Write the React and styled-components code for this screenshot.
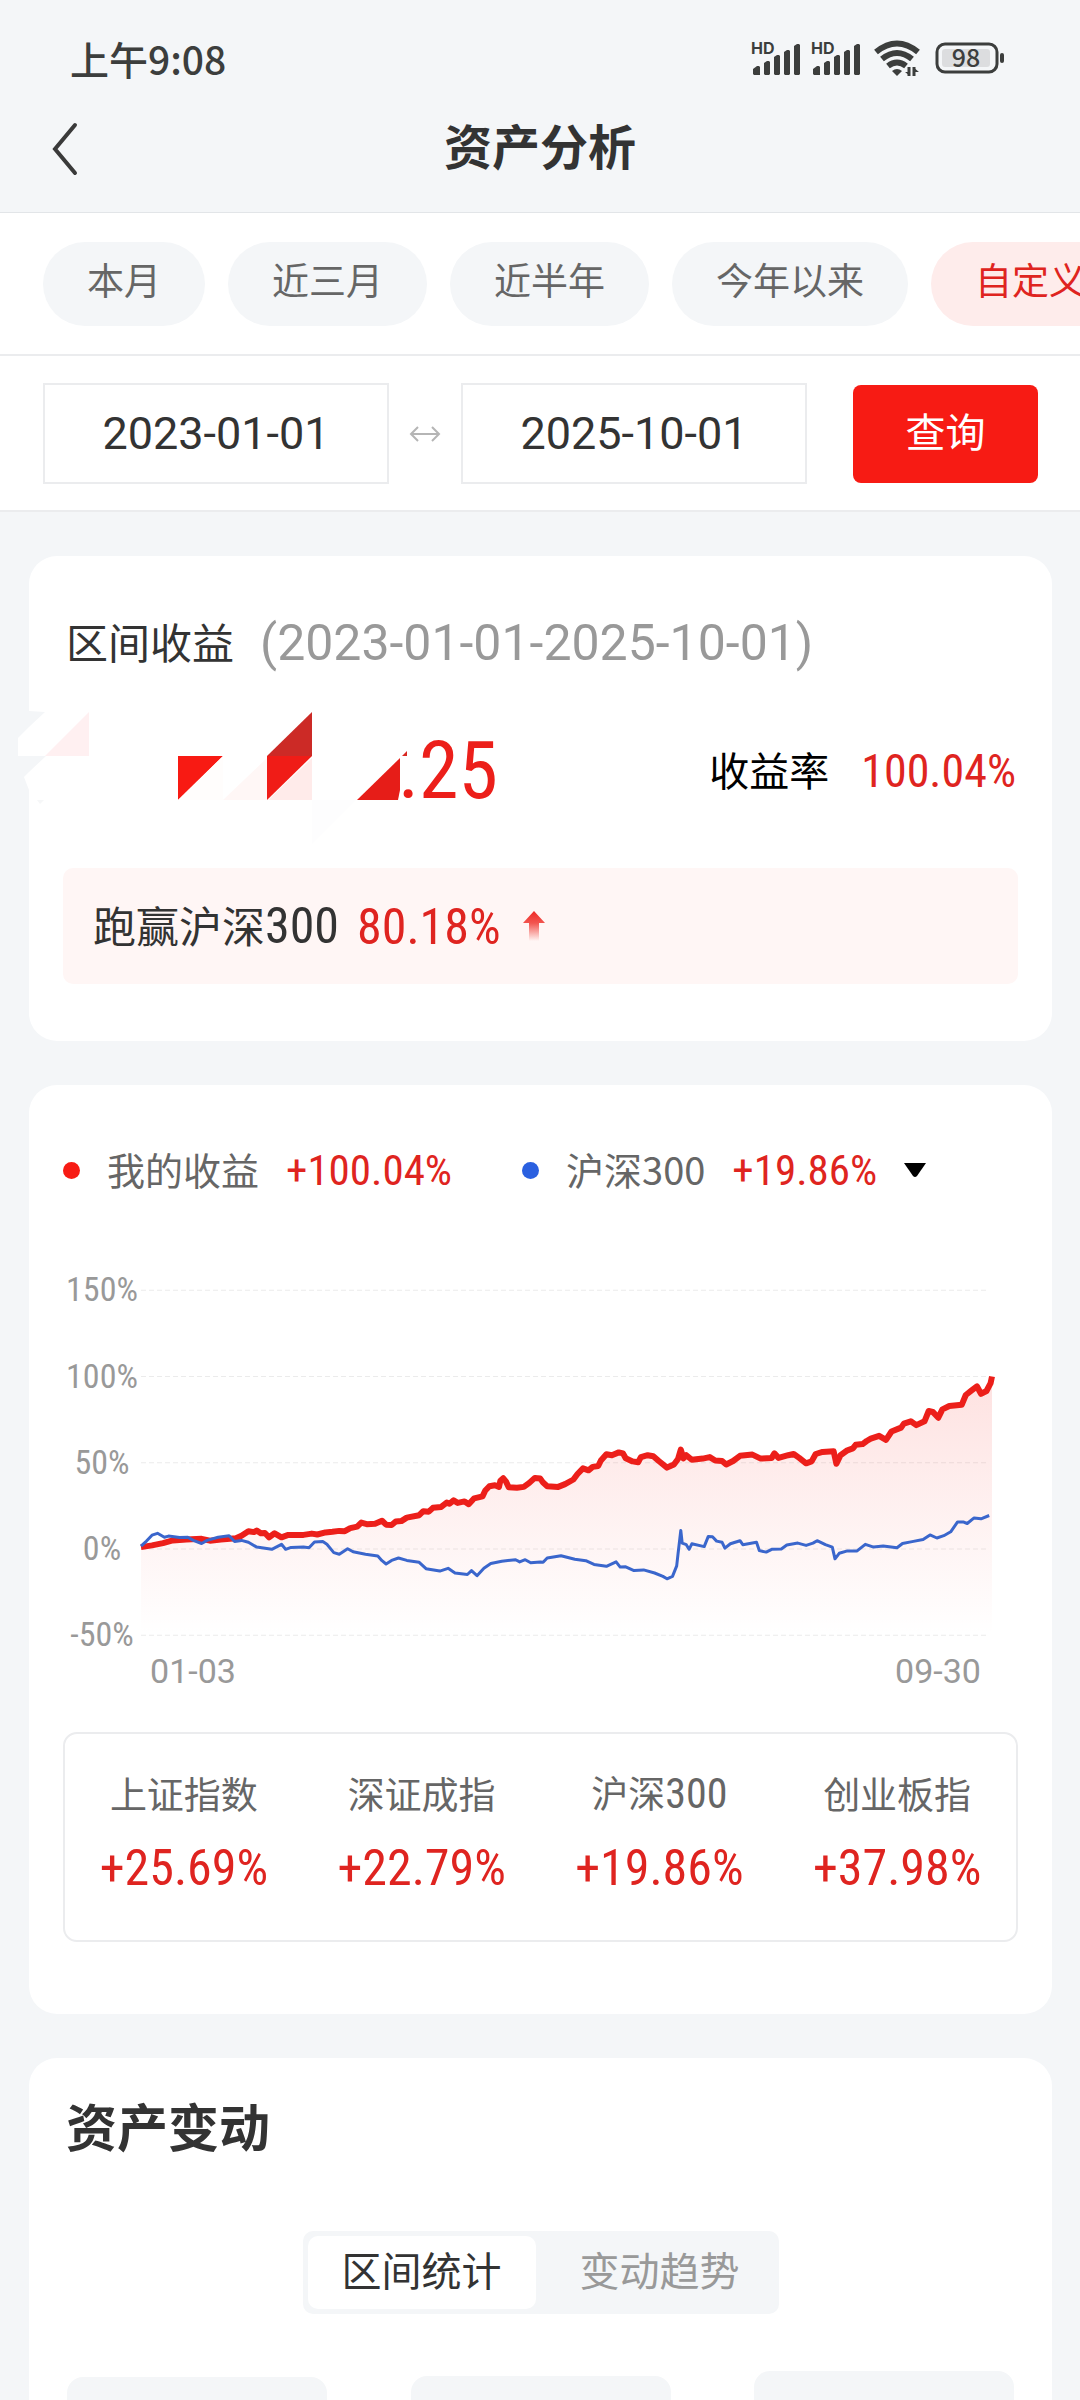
import React, { useState } from 'react';
import styled, { createGlobalStyle } from 'styled-components';

const colors = {
	page: '#f4f6f8',
	line: '#ebecee',
	text: '#333333',
	grey: '#666666',
	light: '#999999',
	red: '#df2420',
	button: '#f71b14',
	blue: '#3a66cc',
};

const cjk = '"Noto Sans CJK SC", sans-serif';
const digits = '"Roboto Condensed", "Liberation Sans Narrow", "Noto Sans CJK SC", sans-serif';
const dates = 'Roboto, "Noto Sans CJK SC", sans-serif';

const ranges = ['本月', '近三月', '近半年', '今年以来', '自定义'];

const indexes = [
	{ name: '上证指数', value: '+25.69%' },
	{ name: '深证成指', value: '+22.79%' },
	{ name: '沪深', suffix: '300', value: '+19.86%' },
	{ name: '创业板指', value: '+37.98%' },
];

// [trading day, return in %]
const mine = [
	[0, 1.1], [8, 2.1], [16, 3.4], [23, 5], [33, 5.5], [44, 5.9], [50, 4.8], [58, 5.5], [69, 6.2], [73, 7.7],
	[78, 10.3], [82, 9.8], [84, 10.7], [87, 9.1], [90, 9.3], [93, 6.8], [97, 9.1], [102, 6.8], [107, 8.2],
	[118, 8.2], [124, 8.9], [128, 8.4], [134, 9.6], [139, 10], [144, 10.5], [148, 10.3], [152, 12.1], [157, 13],
	[160, 15.3], [164, 14.4], [170, 14.6], [175, 16.4], [178, 14.1], [182, 13.9], [185, 15.9], [189, 16.2],
	[193, 18.2], [202, 19.6], [205, 21.9], [209, 21.6], [212, 23.9], [218, 24.4], [222, 26.9], [224, 26.2],
	[227, 28.2], [230, 26.7], [235, 27.6], [238, 26], [242, 29.4], [248, 30.5], [250, 33.9], [253, 36.4],
	[257, 36.9], [260, 36], [261, 39.6], [263, 41], [265, 39.2], [267, 35.8], [273, 35.5], [278, 36],
	[282, 38.3], [286, 41.2], [290, 40.8], [292, 38.5], [295, 36.4], [303, 36], [308, 37.6], [314, 40.3],
	[317, 43.5], [321, 46.7], [325, 45.6], [328, 47.6], [332, 48.1], [334, 51.3], [338, 54.9], [342, 54.4],
	[347, 56], [350, 55.4], [352, 52.6], [357, 50.8], [361, 50.3], [363, 53.3], [368, 54.4], [372, 53.8],
	[376, 51], [382, 47.2], [387, 49], [390, 52.2], [392, 57.6], [394, 52.6], [396, 54.4], [400, 51.7],
	[408, 52.4], [413, 53.3], [417, 51.3], [422, 51], [425, 49], [430, 51], [435, 54], [444, 54.7],
	[450, 52.4], [458, 52.8], [460, 55.4], [463, 52.8], [470, 54.4], [474, 55.1], [478, 52.8], [483, 49.7],
	[487, 50.8], [490, 55.1], [495, 56.3], [503, 56.7], [505, 49.4], [508, 54.4], [513, 57.2], [517, 58.3],
	[519, 60.4], [524, 60.8], [527, 62.6], [530, 64], [536, 65.6], [541, 63.3], [545, 68.1], [552, 70.4],
	[554, 72.7], [559, 74], [563, 71.8], [569, 74], [572, 80], [575, 79.5], [579, 76.1], [582, 80.9],
	[587, 82.9], [596, 83.6], [599, 89.3], [603, 91.8], [607, 94.3], [610, 90], [614, 91.6], [617, 96.1],
	[618, 100],
];

const benchmark = [
	[0, 1.6], [4, 4.6], [8, 8], [12, 9.1], [17, 6.8], [20, 7.5], [28, 6.6], [34, 6.8], [38, 5], [44, 3.2],
	[48, 5], [56, 6.8], [64, 7.7], [68, 4.3], [73, 5], [78, 3.9], [84, 1.1], [95, -0.2], [102, 2.7],
	[105, -0.2], [109, 0.9], [118, 1.1], [122, 0.7], [126, 4.1], [132, 4.3], [135, 2.7], [140, -2.1],
	[144, -3], [150, 0.2], [154, -1.6], [163, -3], [172, -4.1], [175, -6.8], [178, -8.7], [182, -6.6],
	[187, -5.2], [193, -6.6], [202, -7.7], [207, -11.4], [217, -12.8], [223, -11.2], [228, -13.9],
	[237, -14.8], [240, -12.5], [244, -15.5], [249, -11.2], [254, -8.4], [262, -7.1], [272, -6.2],
	[275, -7.5], [279, -6.2], [283, -8], [290, -7.5], [292, -7.7], [295, -5.2], [305, -3.9], [315, -5.9],
	[323, -6.8], [329, -8.9], [338, -10], [345, -7.5], [348, -10.5], [352, -10.3], [358, -12.5],
	[365, -12.1], [373, -13.9], [379, -15.9], [382, -17.3], [386, -15.9], [389, -9.8], [390, -3],
	[392, 10.7], [393, 3.4], [396, 2.5], [398, -0.2], [400, 3], [409, 1.4], [412, 7.3], [415, 7.1],
	[418, 4.6], [422, 3.9], [424, 0.5], [428, 3], [435, 4.8], [437, 2.5], [447, 3.9], [449, -0.9],
	[454, -1.8], [458, -0.2], [465, 0], [469, 2.3], [477, 3.4], [483, 2.1], [488, 3.4], [491, 4.8],
	[497, 2.5], [502, 1.1], [504, -5.7], [507, -2.5], [513, -1.1], [520, -1.1], [526, 2.7], [532, 1.1],
	[539, 1.8], [549, 0.7], [553, 3.2], [560, 4.3], [568, 5.5], [573, 8.2], [578, 6.4], [583, 7.7],
	[588, 10], [593, 15.7], [597, 15.7], [600, 14.8], [605, 18], [610, 17.5], [616, 19.4],
];

const GlobalStyle = createGlobalStyle`
	* {
		box-sizing: border-box;
	}

	body {
		margin: 0;
		background: ${colors.page};
		color: ${colors.text};
		font-family: ${cjk};
	}

	button,
	input,
	select {
		margin: 0;
		padding: 0;
		border: 0;
		background: none;
		font: inherit;
		color: inherit;
	}
`;

const Screen = styled.div`
	display: flex;
	flex-direction: column;
	height: 100vh;
`;

const StatusBar = styled.div`
	display: flex;
	align-items: center;
	justify-content: space-between;
	height: 82px;
	padding: 34px 76px 0 70px;
	color: #3c3e3d;
	font-size: 39px;
	font-weight: 500;
	line-height: 48px;
`;

const StatusIcons = styled.div`
	display: flex;
	align-items: center;
	gap: 10px;
`;

const NavBar = styled.header`
	display: grid;
	grid-template-columns: 1fr auto 1fr;
	align-items: center;
	height: 131px;
	padding: 0 42px;
	border-bottom: 1px solid #e2e5e8;
`;

const BackButton = styled.button`
	display: flex;
	justify-self: start;
	padding: 4px 8px 0;
`;

const PageTitle = styled.h1`
	margin: 0;
	padding-bottom: 6px;
	font-size: 48px;
	font-weight: 700;
	line-height: 60px;
`;

const RangeBar = styled.nav`
	display: flex;
	flex: none;
	gap: 23px;
	padding: 29px 43px 28px;
	overflow-x: auto;
	scrollbar-width: none;
	background: #fff;
	border-bottom: 2px solid ${colors.line};
`;

const Chip = styled.button`
	flex: none;
	height: 84px;
	padding: 0 44px 10px;
	border-radius: 42px;
	background: ${(props) => (props.$active ? '#feeceb' : colors.page)};
	color: ${(props) => (props.$active ? colors.red : colors.grey)};
	font-size: 37px;
	line-height: 74px;
`;

const DateBar = styled.form`
	display: flex;
	align-items: center;
	padding: 27px 42px 26px 43px;
	background: #fff;
	border-bottom: 2px solid ${colors.line};
`;

const DateInput = styled.input`
	flex: 1;
	min-width: 0;
	height: 101px;
	border: 2px solid ${colors.line};
	font-family: ${dates};
	font-size: 45px;
	text-align: center;
`;

const ArrowCell = styled.span`
	display: flex;
	justify-content: center;
	width: 72px;
`;

const QueryButton = styled.button`
	width: 185px;
	height: 98px;
	margin-left: 46px;
	padding-bottom: 8px;
	border-radius: 8px;
	background: ${colors.button};
	color: #fff;
	font-size: 40px;
`;

const Content = styled.main`
	display: flex;
	flex: 1;
	flex-direction: column;
	gap: 44px;
	min-height: 0;
	padding: 44px 28px 0 29px;
	overflow-y: auto;
	scrollbar-width: none;
`;

const Card = styled.section`
	flex: none;
	padding: ${(props) => props.$padding};
	border-radius: 28px;
	background: #fff;
`;

const Num = styled.span`
	font-family: ${digits};
	font-size: ${(props) => props.$size}px;
	color: ${(props) => props.$color || 'inherit'};
`;

const DateRange = styled.span`
	color: ${colors.light};
	font-family: ${dates};
	font-size: 50px;
`;

// Chinese glyphs sit low in their line box, this lifts them level with the digits
const Label = styled.span`
	padding-bottom: 4px;
`;

const CardHeading = styled.h2`
	display: flex;
	align-items: center;
	gap: 26px;
	height: 66px;
	margin: 0;
	padding-left: 3px;
	font-size: 42px;
	font-weight: 400;
	line-height: 66px;
`;

const AmountRow = styled.div`
	position: relative;
	display: flex;
	align-items: center;
	justify-content: space-between;
	height: 190px;
	padding: 0 2px 0 335px;
`;

const MaskDrawing = styled.svg`
	position: absolute;
	top: 30px;
	left: -48px;
`;

const Rate = styled.div`
	display: flex;
	align-items: center;
	gap: 32px;
	color: #000;
	font-size: 40px;
`;

const Highlight = styled.p`
	display: flex;
	align-items: center;
	height: 116px;
	margin: 2px 0 0;
	padding: 0 30px;
	border-radius: 10px;
	background: #fff6f5;
	font-size: 43px;
	line-height: 60px;
`;

const HighlightValue = styled.span`
	margin: 0 22px 0 18px;
`;

const Legend = styled.div`
	display: flex;
	align-items: center;
	height: 58px;
	color: ${colors.grey};
	font-size: 38px;
`;

const LegendItem = styled.div`
	display: flex;
	align-items: center;
	gap: 27px;
	margin-right: 70px;
`;

const Dot = styled.span`
	width: 17px;
	height: 17px;
	border-radius: 50%;
	background: ${(props) => props.$color};
`;

const BenchmarkSelect = styled.select`
	padding-bottom: 4px;
	appearance: none;
	field-sizing: content;
`;

const ChartSvg = styled.svg`
	display: block;
	width: 100%;
	height: auto;
	margin: 71px 0 22px;
`;

const AxisText = styled.text`
	fill: ${colors.light};
	font-family: ${(props) => props.$font || digits};
	font-size: 34px;
	text-anchor: middle;
`;

const IndexBox = styled.div`
	height: 210px;
	padding-top: 28px;
	border: 2px solid ${colors.line};
	border-radius: 14px;
`;

const IndexTable = styled.table`
	width: 100%;
	table-layout: fixed;
	border-collapse: collapse;
	text-align: center;

	th,
	td {
		height: 60px;
		padding: 0;
		line-height: 60px;
	}

	th {
		color: ${colors.grey};
		font-size: 37px;
		font-weight: 400;
	}

	td {
		padding-top: 14px;
	}
`;

const SectionTitle = styled.h2`
	margin: 0;
	padding: 0 3px 4px;
	font-size: 51px;
	font-weight: 700;
	line-height: 58px;
`;

const Tabs = styled.div`
	display: flex;
	gap: 10px;
	width: fit-content;
	height: 83px;
	margin: 73px auto 57px;
	padding: 5px;
	border-radius: 10px;
	background: ${colors.page};
`;

const Tab = styled.button`
	padding: 0 34px 8px;
	border-radius: 10px;
	background: ${(props) => (props.$active ? '#fff' : 'transparent')};
	color: ${(props) => (props.$active ? colors.text : colors.light)};
	font-size: 40px;
	line-height: 60px;
`;

const Tiles = styled.div`
	display: flex;
	align-items: center;
	justify-content: space-between;
	padding: 0 4px;
`;

const Tile = styled.div`
	width: 260px;
	height: ${(props) => props.$height}px;
	border-radius: 16px;
	background: ${colors.page};
`;

const SignalIcon = () => (
	<svg width='50' height='48' viewBox='0 -6 50 48' fill='#3c3e3d'>
		<text x='0' y='14' fontSize='16' fontWeight='700' fontFamily='Inter, sans-serif'>HD</text>
		<path d='M2 34v-5l4-3h2l1 1v8H3z' />
		<path d='M13 34V23l3-2h2l1 1v12l-1 1h-4z' />
		<path d='M23 34V17l3-2h2l1 1v18l-1 1h-4z' />
		<path d='M33 34V12l3-2h2l1 1v23l-1 1h-4z' />
		<path d='M43 34V6l3-2h2l1 1v29l-1 1h-4z' />
	</svg>
);

const WifiIcon = () => (
	<svg width='52' height='40' viewBox='0 -2 52 40' fill='none' stroke='#3c3e3d' strokeWidth='6'>
		<path d='M5 12Q26 -5 47 12' />
		<path d='M11 19Q26 7 41 19' />
		<path d='M17 26Q26 19 35 26' />
		<path d='M21 31q5-4 10 0l-5 5z' fill='#3c3e3d' stroke='none' />
		<path d='M38 27v9M43 36v-9' strokeWidth='3' />
		<path d='M34 32h5v4zM42 27l6 5h-6z' fill='#3c3e3d' stroke='none' />
	</svg>
);

const BatteryIcon = () => (
	<svg width='71' height='48' viewBox='0 -6 71 48'>
		<rect x='4' y='4' width='60' height='28' rx='8' fill='none' stroke='#3c3e3d' strokeWidth='3' />
		<rect x='9' y='9' width='48' height='18' rx='3' fill='#dcdddf' />
		<rect x='67' y='13' width='4' height='10' rx='2' fill='#3c3e3d' />
		<text x='33' y='27' textAnchor='middle' fontSize='25' fontWeight='500' fill='#3c3e3d' fontFamily={cjk}>
			98
		</text>
	</svg>
);

// mosaic tiles that hide the integer part of the amount
const AmountMask = () => (
	<MaskDrawing width='420' height='146' viewBox='15 706 420 146' aria-hidden='true'>
		<path d='M29 711L45 712L29 727z' fill={colors.page} />
		<path d='M29 727L18 738V756H29z' fill='#fff' />
		<path d='M29 756H46L29 772z' fill={colors.page} />
		<path d='M29 772L24 777L29 790z' fill='#fff' />
		<path d='M37 800H44L40 804z' fill='#f6f7f8' />
		<path d='M45 756L89 712V756z' fill='#fff0f1' />
		<path d='M178 756H223L178 800z' fill='#f81a13' />
		<path d='M223 756V800H178z' fill='#fffdfc' />
		<path d='M223 800L267 758V800z' fill='#fff7f6' />
		<path d='M267 756L312 712V756z' fill='#cc2a26' />
		<path d='M267 756H312L267 800z' fill='#f01c17' />
		<path d='M312 758V800H268z' fill='#ffebea' />
		<path d='M312 800H356L312 844z' fill='#fdfdfe' />
		<path d='M357 800L400 758V790L398 800z' fill='#e61d18' />
		<path d='M402 756L407 751V756z' fill='#d92722' />
	</MaskDrawing>
);

const xScale = (day) => 78 + (day * 851) / 618;
const yScale = (value) => 279 - value * 1.725;

const toPath = (series) =>
	series.map(([day, value], i) => `${i ? 'L' : 'M'}${xScale(day).toFixed(1)} ${yScale(value).toFixed(1)}`).join('');

const ReturnChart = () => (
	<ChartSvg viewBox='0 0 955 440' role='img' aria-label='收益走势'>
		<defs>
			<linearGradient id='area' x1='0' y1='106' x2='0' y2='365' gradientUnits='userSpaceOnUse'>
				<stop offset='0' stopColor='#f51b14' stopOpacity='0.13' />
				<stop offset='1' stopColor='#f51b14' stopOpacity='0' />
			</linearGradient>
		</defs>
		{[150, 100, 50, 0, -50].map((tick) => (
			<g key={tick}>
				<line
					x1='78'
					x2='925'
					y1={yScale(tick)}
					y2={yScale(tick)}
					stroke='#ebebeb'
					strokeWidth='1'
					strokeDasharray='5 3'
				/>
				<AxisText x='39' y={yScale(tick) + 11}>{tick}%</AxisText>
			</g>
		))}
		<AxisText $font={dates} x='130' y='413'>01-03</AxisText>
		<AxisText $font={dates} x='875' y='413'>09-30</AxisText>
		<path d={`${toPath(mine)}V365H78z`} fill='url(#area)' />
		<path d={toPath(mine)} fill='none' stroke='#ec1f1a' strokeWidth='6' strokeLinejoin='round' />
		<path d={toPath(benchmark)} fill='none' stroke={colors.blue} strokeWidth='3' strokeLinejoin='round' />
	</ChartSvg>
);

export const App = () => {
	const [range, setRange] = useState('自定义');
	const [tab, setTab] = useState('区间统计');
	const [from, setFrom] = useState('2023-01-01');
	const [to, setTo] = useState('2025-10-01');

	return (
		<Screen>
			<GlobalStyle />
			<StatusBar>
				<span>上午9:08</span>
				<StatusIcons>
					<SignalIcon />
					<SignalIcon />
					<WifiIcon />
					<BatteryIcon />
				</StatusIcons>
			</StatusBar>
			<NavBar>
				<BackButton aria-label='返回'>
					<svg width='32' height='56' viewBox='0 0 32 56' fill='none' stroke='#3a3a3a' strokeWidth='4'>
						<path d='M25 4L5 28L25 52' strokeLinecap='round' />
					</svg>
				</BackButton>
				<PageTitle>资产分析</PageTitle>
			</NavBar>
			<RangeBar>
				{ranges.map((name) => (
					<Chip key={name} $active={name === range} onClick={() => setRange(name)}>
						{name}
					</Chip>
				))}
			</RangeBar>
			<DateBar onSubmit={(event) => event.preventDefault()}>
				<DateInput aria-label='开始日期' value={from} onChange={(event) => setFrom(event.target.value)} />
				<ArrowCell>
					<svg width='32' height='16' viewBox='0 0 32 16' fill='none' stroke='#b5b5b5' strokeWidth='2'>
						<path d='M2 8H30M9 1L2 8L9 15M23 1L30 8L23 15' />
					</svg>
				</ArrowCell>
				<DateInput aria-label='结束日期' value={to} onChange={(event) => setTo(event.target.value)} />
				<QueryButton type='submit'>查询</QueryButton>
			</DateBar>

			<Content>
				<Card $padding='54px 34px 57px'>
					<CardHeading>
						<Label>区间收益</Label>
						<DateRange>(2023-01-01-2025-10-01)</DateRange>
					</CardHeading>
					<AmountRow>
						<Num $size={80} $color='#ec1f1a'>.25</Num>
						<AmountMask />
						<Rate>
							<Label>收益率</Label>
							<Num $size={46} $color={colors.red}>100.04%</Num>
						</Rate>
					</AmountRow>
					<Highlight>
						<Label>跑赢沪深</Label>
						<Num $size={50}>300</Num>
						<HighlightValue>
							<Num $size={50} $color={colors.red}>80.18%</Num>
						</HighlightValue>
						<svg width='22' height='30' viewBox='0 0 22 30' aria-hidden='true'>
							<defs>
								<linearGradient id='up' x1='0' y1='0' x2='0' y2='1'>
									<stop offset='0' stopColor='#ee2a25' />
									<stop offset='0.4' stopColor='#f2554f' />
									<stop offset='1' stopColor='#f2554f' stopOpacity='0' />
								</linearGradient>
							</defs>
							<path d='M11 0L22 12H16V30H6V12H0z' fill='url(#up)' />
						</svg>
					</Highlight>
				</Card>

				<Card $padding='56px 34px 72px'>
					<Legend>
						<LegendItem>
							<Dot $color={colors.button} />
							<Label>我的收益</Label>
							<Num $size={43} $color={colors.red}>+100.04%</Num>
						</LegendItem>
						<LegendItem>
							<Dot $color='#2a60e0' />
							<BenchmarkSelect aria-label='对比指数'>
								<option>沪深300</option>
							</BenchmarkSelect>
							<Num $size={43} $color={colors.red}>+19.86%</Num>
							<svg width='22' height='14' viewBox='0 0 22 14' aria-hidden='true'>
								<path d='M0 0H22L13 13Q11 15 9 13z' fill='#000' />
							</svg>
						</LegendItem>
					</Legend>
					<ReturnChart />
					<IndexBox>
						<IndexTable>
							<thead>
								<tr>
									{indexes.map(({ name, suffix }) => (
										<th key={name} scope='col'>
											{name}
											{suffix && <Num $size={42}>{suffix}</Num>}
										</th>
									))}
								</tr>
							</thead>
							<tbody>
								<tr>
									{indexes.map(({ name, value }) => (
										<td key={name}>
											<Num $size={50} $color={colors.red}>{value}</Num>
										</td>
									))}
								</tr>
							</tbody>
						</IndexTable>
					</IndexBox>
				</Card>

				<Card $padding='38px 34px 57px'>
					<SectionTitle>资产变动</SectionTitle>
					<Tabs>
						{['区间统计', '变动趋势'].map((name) => (
							<Tab key={name} $active={name === tab} onClick={() => setTab(name)}>
								{name}
							</Tab>
						))}
					</Tabs>
					<Tiles>
						<Tile $height={160} />
						<Tile $height={162} />
						<Tile $height={172} />
					</Tiles>
				</Card>
			</Content>
		</Screen>
	);
};

export default App;
